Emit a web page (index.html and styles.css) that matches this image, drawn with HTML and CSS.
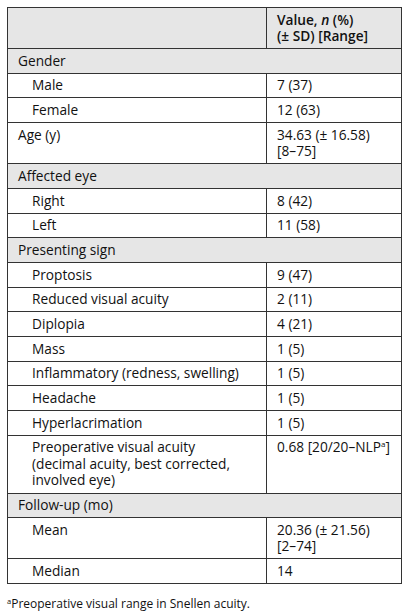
FILE: index.html
```html
<!DOCTYPE html>
<html>
<head>
<meta charset="utf-8">
<link rel="stylesheet" href="styles.css">
</head>
<body>
<table class="data">
  <colgroup><col class="c1"><col class="c2"></colgroup>
  <thead>
    <tr class="head"><th></th><th>Value, <i>n</i> (%)<br>(± SD) [Range]</th></tr>
  </thead>
  <tbody>
    <tr class="sec"><td colspan="2">Gender</td></tr>
    <tr><td class="ind">Male</td><td>7 (37)</td></tr>
    <tr><td class="ind">Female</td><td>12 (63)</td></tr>
    <tr><td>Age (y)</td><td>34.63 (± 16.58)<br>[8–75]</td></tr>
    <tr class="sec"><td colspan="2">Affected eye</td></tr>
    <tr><td class="ind">Right</td><td>8 (42)</td></tr>
    <tr><td class="ind">Left</td><td>11 (58)</td></tr>
    <tr class="sec"><td colspan="2">Presenting sign</td></tr>
    <tr><td class="ind">Proptosis</td><td>9 (47)</td></tr>
    <tr><td class="ind">Reduced visual acuity</td><td>2 (11)</td></tr>
    <tr><td class="ind">Diplopia</td><td>4 (21)</td></tr>
    <tr><td class="ind">Mass</td><td>1 (5)</td></tr>
    <tr><td class="ind">Inflammatory (redness, swelling)</td><td>1 (5)</td></tr>
    <tr><td class="ind">Headache</td><td>1 (5)</td></tr>
    <tr><td class="ind">Hyperlacrimation</td><td>1 (5)</td></tr>
    <tr><td class="ind">Preoperative visual acuity<br>(decimal acuity, best corrected,<br>involved eye)</td><td>0.68 [20/20–NLP<sup>a</sup>]</td></tr>
    <tr class="sec"><td colspan="2">Follow-up (mo)</td></tr>
    <tr><td class="ind">Mean</td><td>20.36 (± 21.56)<br>[2–74]</td></tr>
    <tr><td class="ind">Median</td><td>14</td></tr>
  </tbody>
</table>
<p class="note"><sup>a</sup>Preoperative visual range in Snellen acuity.</p>
</body>
</html>
```
FILE: styles.css
```css
html, body {
  margin: 0;
  padding: 0;
  background: #ffffff;
}
body {
  font-family: "Open Sans", "Noto Sans", sans-serif;
  color: #111111;
  padding: 7px 0 0 7px;
}
.data {
  border-collapse: collapse;
  width: 394px;
  table-layout: fixed;
  font-size: 13.7px;
  line-height: 16.5px;
}
.c1 { width: 259px; }
.c2 { width: 135px; }
.data th,
.data td {
  border: 1px solid #333333;
  padding: 3.6px 6px 3.6px 10px;
  text-align: left;
  vertical-align: top;
  font-weight: 400;
}
.data th {
  font-weight: 600;
  background: #e6e6e6;
  padding-top: 3.5px;
  padding-bottom: 3.5px;
}
.data td.ind {
  padding-left: 24px;
}
.sec td {
  background: #e6e6e6;
}
.data sup {
  font-size: 8px;
  line-height: 0;
  vertical-align: 5px;
}
.note {
  margin: 12px 0 0 0;
  font-size: 12px;
  line-height: 15px;
}
.note sup {
  font-size: 7.5px;
  line-height: 0;
  vertical-align: 4px;
}
```
